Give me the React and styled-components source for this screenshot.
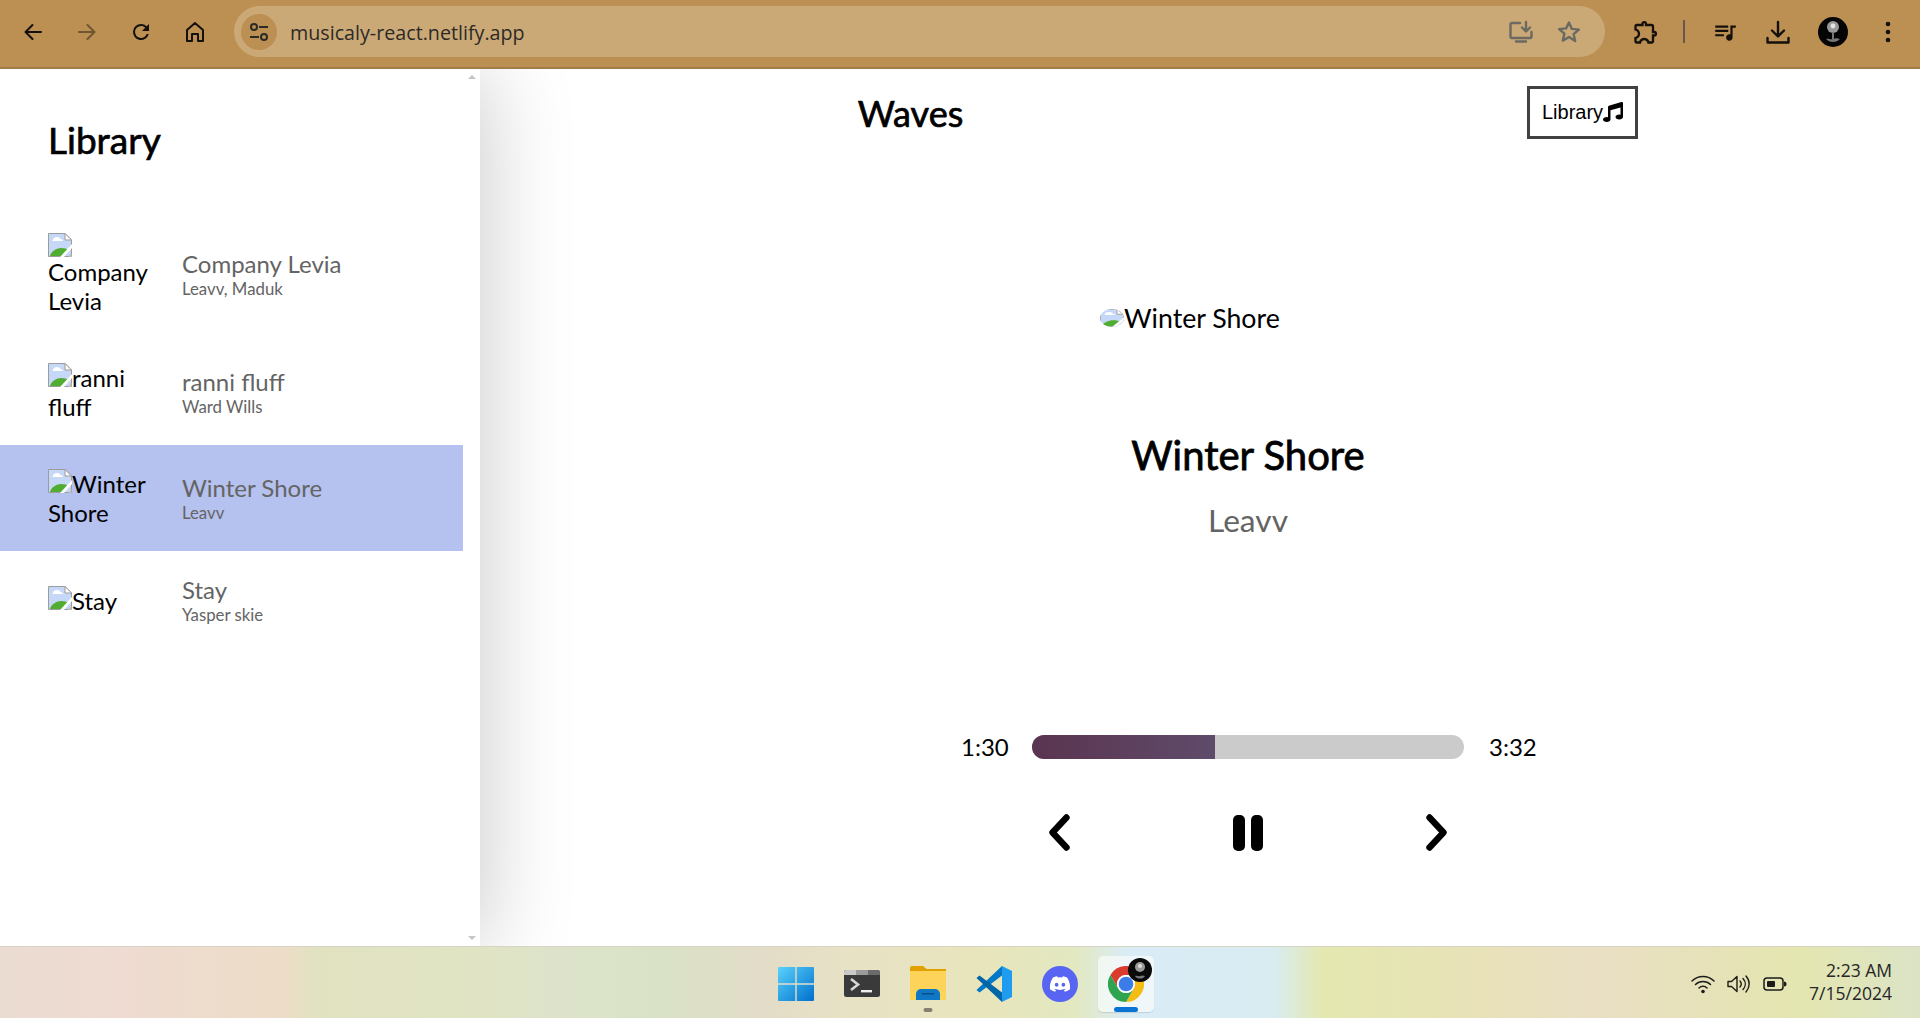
import React from "react";
import styled, { createGlobalStyle } from "styled-components";
import { FaMusic, FaDiscord } from "react-icons/fa";
import { MdOutlineExtension, MdQueueMusic } from "react-icons/md";

const Global = createGlobalStyle`
  * { box-sizing: border-box; margin: 0; padding: 0; }
  html, body { height: 100%; }
  body { font-family: "Lato", "Liberation Sans", sans-serif; background: #fff; color: #000; overflow: hidden; }
  #root { height: 100%; }
`;

const Screen = styled.div`
  display: flex;
  flex-direction: column;
  height: 1018px;
  width: 1920px;
`;

/* browser toolbar */
const Toolbar = styled.header`
  flex: 0 0 69px;
  display: flex;
  align-items: center;
  padding: 0 20px 4px 21px;
  background: #bc8f53;
  border-bottom: 2px solid #a27c48;
  color: #14110c;
`;
const NavIcons = styled.div`
  flex: none;
  display: flex;
  align-items: center;
  gap: 30px;
  margin-right: 27px;
`;
const ToolIcon = styled.svg`
  display: block;
  width: ${(p) => p.$size || 24}px;
  height: ${(p) => p.$size || 24}px;
  flex: none;
  opacity: ${(p) => (p.$dim ? 0.45 : 1)};
`;
const Omnibox = styled.div`
  flex: none;
  display: flex;
  align-items: center;
  width: 1371px;
  height: 51px;
  border-radius: 26px;
  background: #cba977;
  padding: 0 24px 0 7px;
`;
const SiteChip = styled.div`
  display: flex;
  align-items: center;
  justify-content: center;
  width: 36px;
  height: 36px;
  border-radius: 50%;
  background: #bc8f53;
`;
const Url = styled.span`
  flex: 1;
  margin: 2px 0 0 13px;
  font-family: "Open Sans", "Liberation Sans", sans-serif;
  font-size: 19.7px;
  color: #2b2a26;
`;
const OmniIcons = styled.div`
  display: flex;
  align-items: center;
  gap: 24px;
  color: #6b6a62;
`;
const ToolActions = styled.div`
  flex: none;
  display: flex;
  align-items: center;
  margin-left: 27px;
`;
const Divider = styled.span`
  width: 2px;
  height: 23px;
  background: #66584a;
  margin: 0 27px 0 23px;
`;
const ActionGap = styled.div`
  display: flex;
  align-items: center;
  gap: 28px;
`;

/* page */
const Page = styled.div`
  flex: 1;
  display: flex;
  overflow: hidden;
  min-height: 0;
`;
const LibraryPanel = styled.aside`
  flex: 0 0 480px;
  display: flex;
  background: #fff;
  box-shadow: 2px 2px 85px rgb(200, 200, 200);
  position: relative;
  z-index: 1;
`;
const LibraryContent = styled.div`
  flex: 1;
  min-width: 0;
`;
const LibraryTitle = styled.h2`
  padding: 49px 48px 47px;
  font-size: 37px;
  font-weight: 400;
  -webkit-text-stroke: 0.7px #000;
  line-height: 44px;
`;
const Scrollbar = styled.div`
  flex: 0 0 17px;
  display: flex;
  flex-direction: column;
  justify-content: space-between;
  align-items: center;
  padding: 6px 0;
`;
const Arrow = styled.span`
  width: 0;
  height: 0;
  border-left: 4px solid transparent;
  border-right: 4px solid transparent;
  ${(p) => (p.$down ? "border-top: 4px solid #c4c4c4;" : "border-bottom: 4px solid #c4c4c4;")}
`;
const SongRow = styled.div`
  display: flex;
  align-items: center;
  padding: 24px 48px;
  background: ${(p) => (p.$active ? "#b5c1ee" : "transparent")};
`;
const Cover = styled.div`
  flex: 0 0 110px;
  width: 110px;
  font-size: 24px;
  line-height: 29px;
  color: #000;
`;
const SongInfo = styled.div`
  margin-left: 24px;
  color: #646464;
`;
const SongName = styled.h3`
  font-size: 24px;
  font-weight: 400;
  line-height: 29px;
`;
const SongArtist = styled.h4`
  font-size: 16.8px;
  font-weight: 400;
  line-height: 21px;
`;
const BrokenSvg = styled.svg`
  display: ${(p) => (p.$block ? "block" : "inline-block")};
  width: 24px;
  height: 24px;
  vertical-align: baseline;
`;

const Main = styled.main`
  flex: 1;
  margin-left: 96px;
  min-width: 0;
  display: flex;
  flex-direction: column;
  align-items: center;
`;
const Nav = styled.nav`
  flex: 0 0 88px;
  width: 100%;
  display: flex;
  align-items: center;
  justify-content: space-around;
`;
const Brand = styled.h1`
  font-size: 36px;
  font-weight: 400;
  -webkit-text-stroke: 0.7px #000;
  line-height: 44px;
`;
const LibraryButton = styled.button`
  display: flex;
  align-items: center;
  margin-bottom: 2px;
  background: #fff;
  border: 3px solid rgb(65, 65, 65);
  padding: 12px;
  font-family: "Liberation Sans", Arial, sans-serif;
  font-size: 20px;
  line-height: 23px;
  color: #000;
  svg { width: 20px; height: 20px; }
`;
const NowPlayingCover = styled.div`
  width: 296px;
  margin-top: 145px;
  display: flex;
  align-items: center;
  font-size: 26.7px;
  line-height: 32px;
`;
const Lens = styled.svg`
  width: 24px;
  height: 18px;
  border-radius: 50%;
  flex: none;
`;
const NowTitle = styled.h2`
  margin-top: 97px;
  font-size: 40px;
  font-weight: 400;
  -webkit-text-stroke: 0.8px #000;
  line-height: 48px;
`;
const NowArtist = styled.h3`
  margin-top: 22px;
  font-size: 31.7px;
  font-weight: 400;
  line-height: 38px;
  color: #646464;
`;
const TimeRow = styled.div`
  margin-top: 193px;
  display: flex;
  align-items: center;
  gap: 25px;
`;
const TimeLabel = styled.span`
  font-size: 24px;
  line-height: 29px;
  width: 46px;
`;
const Track = styled.div`
  width: 432px;
  height: 24px;
  border-radius: 16px;
  background: #cbcbcb;
  overflow: hidden;
`;
const Fill = styled.div`
  height: 100%;
  background: linear-gradient(90deg, #5a3450, #5f4b6a);
`;
const Controls = styled.div`
  margin-top: 53px;
  width: 398px;
  display: flex;
  align-items: center;
  justify-content: space-between;
`;
const Chevron = styled.svg`
  display: block;
  width: 21px;
  height: 37px;
  fill: none;
  stroke: #000;
  stroke-width: 6.4;
  stroke-linecap: round;
  stroke-linejoin: round;
`;

/* taskbar */
const Taskbar = styled.footer`
  flex: 0 0 72px;
  display: flex;
  align-items: center;
  padding: 2px 28px 0 768px;
  border-top: 1px solid #d8d4c4;
  background: linear-gradient(90deg, #ebdcd2 0%, #efdbd2 6%, #edddc8 14.7%, #e0e2c0 16.6%, #e1e4c4 25.5%, #dce3ca 28.7%, #d9e2c6 34.4%, #e2dcc8 39.5%, #e8e2c5 44.6%, #e8e5bc 51%, #e2e8c0 56%, #daecf6 58.7%, #d8ecf2 66.3%, #e4e8b0 68.9%, #e8e2b8 76.5%, #eadfc4 82.9%, #e6e2b8 89.3%, #e4e6b0 93.8%, #dbe3c6 100%);
`;
const Apps = styled.div`
  display: flex;
  gap: 10px;
`;
const AppTile = styled.div`
  position: relative;
  width: 56px;
  height: 56px;
  border-radius: 5px;
  display: flex;
  align-items: center;
  justify-content: center;
  background: ${(p) => (p.$active ? "rgba(255,255,255,0.6)" : "transparent")};
  box-shadow: ${(p) => (p.$active ? "0 1px 1px rgba(0,0,0,0.12)" : "none")};
`;
const Indicator = styled.span`
  position: absolute;
  bottom: 0;
  left: 50%;
  transform: translateX(-50%);
  width: ${(p) => (p.$active ? "24px" : "9px")};
  height: ${(p) => (p.$active ? "5px" : "4px")};
  border-radius: 3px;
  background: ${(p) => (p.$active ? "#0a74d4" : "#85806f")};
`;
const Badge = styled.svg`
  position: absolute;
  top: 2px;
  right: 2px;
  width: 24px;
  height: 24px;
`;
const Discord = styled.div`
  width: 36px;
  height: 36px;
  border-radius: 50%;
  background: #5865f2;
  color: #fff;
  display: flex;
  align-items: center;
  justify-content: center;
  svg { width: 22px; height: 22px; }
`;
const Tray = styled.div`
  margin-left: auto;
  display: flex;
  align-items: center;
  gap: 12px;
`;
const Clock = styled.div`
  margin: -3px 0 0 10px;
  text-align: right;
  font-family: "Open Sans", "Liberation Sans", sans-serif;
  font-size: 17.5px;
  line-height: 23px;
  color: #262626;
`;

const BrokenPaint = () => (
  <>
    <path d="M.5.5H17l6.500 6.500V23.500H.5z" fill="#c6d8f7" stroke="#9c9c9c" strokeWidth="1" />
    <path d="M17 .5V7h6.500z" fill="#fff" stroke="#9c9c9c" strokeWidth="1" />
    <path d="M5 7c0-2 2-3 4-3 1.500 0 3 .7 3.500 2 1.600 0 2.500 1 2.500 2H4z" fill="#fff" />
    <path d="M2 23c1-5 7-8 11-8 4 0 6 .8 7 2l-6 6z" fill="#50ad32" />
    <path d="M24 11 L12 24 H16 L24 15z" fill="#fff" />
    <path d="M20 24h3.500v-4z" fill="#bcbcbc" />
  </>
);

const songs = [
  { name: "Company Levia", artist: "Leavv, Maduk", ownLine: true },
  { name: "ranni fluff", artist: "Ward Wills" },
  { name: "Winter Shore", artist: "Leavv", active: true },
  { name: "Stay", artist: "Yasper skie" },
];

const Stroke = { fill: "none", stroke: "currentColor", strokeWidth: 2, strokeLinecap: "round", strokeLinejoin: "round" };

export default function App() {
  return (
    <Screen>
      <Global />
      <Toolbar>
        <NavIcons>
          <ToolIcon viewBox="0 0 24 24" {...Stroke}><path d="M20 12H5M11.500 5l-7 7 7 7" /></ToolIcon>
          <ToolIcon $dim viewBox="0 0 24 24" {...Stroke}><path d="M4 12h15M12.500 5l7 7-7 7" /></ToolIcon>
          <ToolIcon viewBox="0 0 24 24"><path fill="currentColor" d="M17.650 6.350A7.950 7.950 0 0 0 12 4a8 8 0 1 0 7.730 10h-2.080A6 6 0 1 1 12 6c1.660 0 3.140.69 4.220 1.780L13 11h7V4l-2.350 2.350z" /></ToolIcon>
          <ToolIcon viewBox="0 0 24 24" {...Stroke}><path d="M4 21V10l8-7 8 7v11h-5v-7H9v7z" /></ToolIcon>
        </NavIcons>
        <Omnibox>
          <SiteChip>
            <ToolIcon $size={22} viewBox="0 0 22 22" fill="none" stroke="#2b2a26" strokeWidth="2">
              <circle cx="6" cy="6" r="3" /><path d="M11 6h9M2 16h9" /><circle cx="16" cy="16" r="3" />
            </ToolIcon>
          </SiteChip>
          <Url>musicaly-react.netlify.app</Url>
          <OmniIcons>
            <ToolIcon viewBox="0 0 24 24" {...Stroke}>
              <path d="M11 3H3a1.500 1.500 0 0 0-1.500 1.500v12A1.500 1.500 0 0 0 3 18h18a1.500 1.500 0 0 0 1.500-1.500V12M17 2v9M13 7.500l4 4 4-4M7 21.500h10" strokeWidth="2.400" />
            </ToolIcon>
            <ToolIcon viewBox="0 0 24 24" {...Stroke}>
              <path d="M12 2.500l2.900 6.400 7 .7-5.300 4.600 1.600 6.900L12 17l-6.200 3.600 1.600-6.900-5.300-4.600 7-.7z" strokeWidth="2.400" />
            </ToolIcon>
          </OmniIcons>
        </Omnibox>
        <ToolActions>
          <MdOutlineExtension size={28} />
          <Divider />
          <ActionGap>
            <MdQueueMusic size={26} />
            <ToolIcon viewBox="0 0 24 24" fill="none" stroke="currentColor" strokeWidth="2.400" strokeLinecap="round" strokeLinejoin="round">
              <path d="M12 2v14M6 10.500l6 6 6-6M1.500 18v4.500h21V18" />
            </ToolIcon>
            <ToolIcon $size={30} viewBox="0 0 30 30">
              <circle cx="15" cy="15" r="15" fill="#050505" />
              <circle cx="15" cy="10" r="6" fill="#9a9a9a" />
              <circle cx="15" cy="9" r="2.400" fill="#e4e4e4" />
              <path d="M14 15h2v7h-2zM8 22c3-1 4 1 7 0s4-1 7 0c-2 2-4 3-7 3s-5-1-7-3z" fill="#777" />
            </ToolIcon>
            <ToolIcon viewBox="0 0 6 24" $size={24}>
              <circle cx="3" cy="4" r="2.300" fill="currentColor" />
              <circle cx="3" cy="12" r="2.300" fill="currentColor" />
              <circle cx="3" cy="20" r="2.300" fill="currentColor" />
            </ToolIcon>
          </ActionGap>
        </ToolActions>
      </Toolbar>

      <Page>
        <LibraryPanel>
          <LibraryContent>
            <LibraryTitle>Library</LibraryTitle>
            {songs.map((s) => (
              <SongRow key={s.name} $active={s.active}>
                <Cover>
                  <BrokenSvg viewBox="0 0 24 24" $block={s.ownLine}><BrokenPaint /></BrokenSvg>
                  {s.name}
                </Cover>
                <SongInfo>
                  <SongName>{s.name}</SongName>
                  <SongArtist>{s.artist}</SongArtist>
                </SongInfo>
              </SongRow>
            ))}
          </LibraryContent>
          <Scrollbar>
            <Arrow />
            <Arrow $down />
          </Scrollbar>
        </LibraryPanel>

        <Main>
          <Nav>
            <Brand>Waves</Brand>
            <LibraryButton>Library<FaMusic /></LibraryButton>
          </Nav>
          <NowPlayingCover>
            <Lens viewBox="0 0 24 24" preserveAspectRatio="none"><BrokenPaint /></Lens>
            Winter Shore
          </NowPlayingCover>
          <NowTitle>Winter Shore</NowTitle>
          <NowArtist>Leavv</NowArtist>
          <TimeRow>
            <TimeLabel>1:30</TimeLabel>
            <Track><Fill style={{ width: `${(90 / 213) * 100}%` }} /></Track>
            <TimeLabel>3:32</TimeLabel>
          </TimeRow>
          <Controls>
            <Chevron viewBox="0 0 21 37"><path d="M17.500 3.500 3.500 18.500l14 15" /></Chevron>
            <svg width="30" height="36" viewBox="0 0 30 36">
              <rect x="0" width="12" height="36" rx="5" />
              <rect x="18" width="12" height="36" rx="5" />
            </svg>
            <Chevron viewBox="0 0 21 37"><path d="M3.500 3.500 17.500 18.500l-14 15" /></Chevron>
          </Controls>
        </Main>
      </Page>

      <Taskbar>
        <Apps>
          <AppTile>
            <ToolIcon $size={36} viewBox="0 0 36 36">
              <defs>
                <linearGradient id="win" x1="0" y1="0" x2="1" y2="1">
                  <stop offset="0" stopColor="#5ad2fc" /><stop offset="1" stopColor="#0070cc" />
                </linearGradient>
              </defs>
              <path fill="url(#win)" d="M1 1h16.300v16.300H0V2a1 1 0 0 1 1-1zM18.700 1H35a1 1 0 0 1 1 1v15.300H18.700zM0 18.700h17.300V35H1a1 1 0 0 1-1-1zM18.700 18.700H36V34a1 1 0 0 1-1 1H18.700z" />
            </ToolIcon>
          </AppTile>
          <AppTile>
            <ToolIcon $size={36} viewBox="0 0 36 27" style={{ height: 27 }}>
              <rect width="36" height="27" rx="2.500" fill="#3a3a3a" />
              <path d="M0 5V2.500A2.500 2.500 0 0 1 2.500 0H12v5z" fill="#c9c9c9" />
              <path d="M12 0h12v5H12z" fill="#9b9b9b" />
              <path d="M24 0h9.500A2.500 2.500 0 0 1 36 2.500V5H24z" fill="#6b6b6b" />
              <path d="M7 9l7 5.500L7 20" fill="none" stroke="#d8d8d8" strokeWidth="2.600" />
              <path d="M17 20h11v2.400H17z" fill="#eee" />
            </ToolIcon>
          </AppTile>
          <AppTile>
            <ToolIcon $size={36} viewBox="0 0 36 36">
              <path d="M0 2a2 2 0 0 1 2-2h11l3.500 3H36v4H0z" fill="#e1a200" />
              <path d="M0 5h36v28a1 1 0 0 1-1 1H1a1 1 0 0 1-1-1z" fill="#fdd35a" />
              <path d="M6 34v-6a5 5 0 0 1 5-5h14a5 5 0 0 1 5 5v6z" fill="#0f78c6" />
              <path d="M12 27h12v1.600H12z" fill="#0a4f8a" />
            </ToolIcon>
            <Indicator />
          </AppTile>
          <AppTile>
            <ToolIcon $size={36} viewBox="0 0 36 36">
              <path d="M26 0v9.500L3.500 26.500.5 24z" fill="#0078c8" />
              <path d="M26 36v-9.500L3.500 9.500.5 12z" fill="#0065a9" />
              <path d="M26 0l10 5v26l-10 5z" fill="#1f9cf0" />
            </ToolIcon>
          </AppTile>
          <AppTile>
            <Discord><FaDiscord /></Discord>
          </AppTile>
          <AppTile $active>
            <ToolIcon $size={36} viewBox="0 0 36 36">
              <path d="M18 9h15.600A18 18 0 0 0 2.400 9l7.800 13.500A9 9 0 0 1 18 9z" fill="#db3a2e" />
              <path d="M33.600 9H18a9 9 0 0 1 7.800 13.500L18 36A18 18 0 0 0 33.600 9z" fill="#f4bc14" />
              <path d="M2.400 9A18 18 0 0 0 18 36l7.800-13.500a9 9 0 0 1-15.600 0z" fill="#2ea44f" />
              <circle cx="18" cy="18" r="9" fill="#fff" />
              <circle cx="18" cy="18" r="7.300" fill="#3b7de8" />
            </ToolIcon>
            <Badge viewBox="0 0 24 24">
              <circle cx="12" cy="12" r="12" fill="#0a0a0a" />
              <circle cx="12" cy="9" r="5" fill="#9a9a9a" />
              <circle cx="12" cy="8" r="2" fill="#ddd" />
              <path d="M7 18c2-1 3 .8 5 0s3-.8 5 0c-1 2-3 2.600-5 2.600S8 20 7 18z" fill="#777" />
            </Badge>
            <Indicator $active />
          </AppTile>
        </Apps>
        <Tray>
          <ToolIcon viewBox="0 0 24 20" fill="none" stroke="#1c1c1c" strokeWidth="1.500" strokeLinecap="round">
            <path d="M1 7c6-6 16-6 22 0M4.500 10.500c4-4 11-4 15 0M8 14c2.200-2.200 5.800-2.200 8 0" />
            <circle cx="12" cy="17.500" r="1.800" fill="#1c1c1c" stroke="none" />
          </ToolIcon>
          <ToolIcon viewBox="0 0 24 24" fill="none" stroke="#1c1c1c" strokeWidth="1.400" strokeLinejoin="round" strokeLinecap="round">
            <path d="M1 9.500v5h3.500L10 19.500v-15L4.500 9.500z" />
            <path d="M13 9c1.500 1.800 1.500 4.200 0 6M16 6.500c3 3.300 3 7.700 0 11M19 4c4.200 4.800 4.200 11.200 0 16" />
          </ToolIcon>
          <ToolIcon viewBox="0 0 24 24" fill="none">
            <rect x="1" y="6" width="19" height="12" rx="3" stroke="#1c1c1c" strokeWidth="1.500" />
            <rect x="4" y="9" width="8" height="6" rx="1" fill="#1c1c1c" />
            <path d="M21 9.500a2.500 2.500 0 0 1 0 5z" fill="#1c1c1c" />
          </ToolIcon>
          <Clock>2:23 AM<br />7/15/2024</Clock>
        </Tray>
      </Taskbar>
    </Screen>
  );
}
